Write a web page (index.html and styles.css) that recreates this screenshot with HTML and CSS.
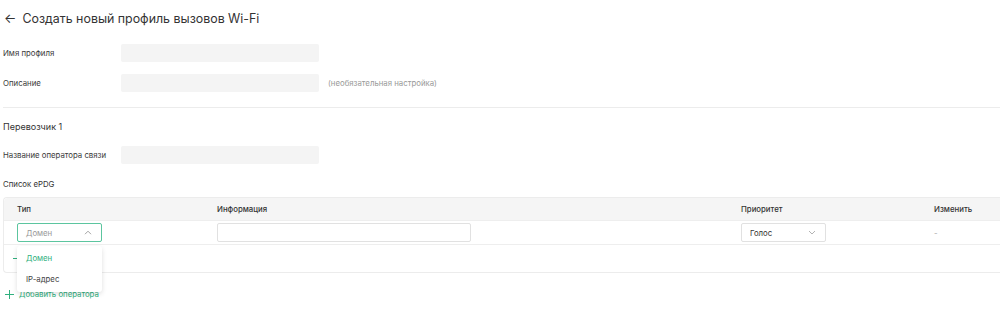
FILE: index.html
```html
<!DOCTYPE html>
<html>
	<head>
		<meta charset="UTF-8">
		<title>Wi-Fi</title>
		<link rel="stylesheet" href="styles.css">
	</head>
	<body>
		<div class="page">
			<div class="title">
				<span class="back">&larr;</span>
				<span>Создать новый профиль вызовов Wi-Fi</span>
			</div>

			<div class="field">
				<label>Имя профиля</label>
				<div class="inp"></div>
			</div>
			<div class="field">
				<label>Описание</label>
				<div class="inp"></div>
				<span class="hint">(необязательная настройка)</span>
			</div>

			<div class="divider"></div>

			<div class="carrier">Перевозчик 1</div>
			<div class="field">
				<label>Название оператора связи</label>
				<div class="inp"></div>
			</div>
			<div class="list-title">Список ePDG</div>

			<div class="table">
				<div class="row head">
					<div class="c1">Тип</div>
					<div class="c2">Информация</div>
					<div class="c3">Приоритет</div>
					<div class="c4">Изменить</div>
				</div>
				<div class="row body">
					<div class="c1">
						<div class="select open">
							<span>Домен</span>
							<svg width="8" height="5" viewBox="0 0 8 5"><path d="M1 4.2L4 1.2L7 4.2" fill="none" stroke="#999" stroke-width="0.9"/></svg>
						</div>
						<div class="menu">
							<div class="opt active">Домен</div>
							<div class="opt">IP-адрес</div>
						</div>
					</div>
					<div class="c2"><div class="text-inp"></div></div>
					<div class="c3">
						<div class="select">
							<span>Голос</span>
							<svg width="8" height="5" viewBox="0 0 8 5"><path d="M1 1L4 4L7 1" fill="none" stroke="#aaa" stroke-width="0.9"/></svg>
						</div>
					</div>
					<div class="c4 dash">-</div>
				</div>
				<div class="add-row">
					<svg class="plus" width="9" height="9" viewBox="0 0 9 9"><path d="M4.5 0V9M0 4.5H9" stroke="#2fb07e" stroke-width="1"/></svg>
				</div>
			</div>

			<div class="add-op">
				<svg class="plus" width="9" height="9" viewBox="0 0 9 9"><path d="M4.5 0V9M0 4.5H9" stroke="#2fb07e" stroke-width="1"/></svg>
				<span>Добавить оператора</span>
			</div>
		</div>
	</body>
</html>
```

FILE: styles.css
```css
body{
	margin: 0;
	padding: 0;
	background: #ffffff;
	font-family: Inter, "Noto Sans", sans-serif;
	color: #333333;
}
.page{
	padding: 8px 0 0 3px;
}
.title{
	display: flex;
	align-items: center;
	gap: 6px;
	font-size: 12.4px;
	color: #333;
	height: 20px;
}
.back{
	font-size: 13px;
	margin-left: 1px;
}
.field{
	display: flex;
	align-items: center;
	font-size: 7.8px;
	height: 18px;
	color: #3a3a3a;
}
.title + .field{
	margin-top: 16px;
}
.field + .field{
	margin-top: 12px;
}
.field label{
	width: 118px;
}
.inp{
	width: 198px;
	height: 18px;
	background: #f4f4f4;
	border-radius: 2px;
}
.hint{
	margin-left: 9px;
	color: #999;
}
.divider{
	height: 1px;
	background: #ececec;
	margin-top: 15px;
}
.carrier{
	margin-top: 12px;
	font-size: 9px;
	height: 13px;
	line-height: 13px;
}
.carrier + .field{
	margin-top: 13px;
}
.list-title{
	margin-top: 14px;
	font-size: 7.8px;
	height: 12px;
	line-height: 12px;
}
.table{
	margin-top: 7px;
	border: 1px solid #ececec;
	border-right: none;
	border-radius: 4px 0 0 4px;
	height: 76px;
	box-sizing: border-box;
}
.row{
	display: flex;
	align-items: center;
	font-size: 7.8px;
	padding-left: 13px;
	border-bottom: 1px solid #eeeeee;
}
.head{
	background: #f5f5f5;
	height: 22px;
	color: #333;
	font-weight: 500;
	border-radius: 4px 0 0 0;
}
.body{
	height: 23px;
}
.c1{
	width: 200px;
	position: relative;
}
.c2{
	width: 524px;
}
.c3{
	width: 193px;
}
.dash{
	color: #aaa;
}
.select{
	width: 85px;
	height: 19px;
	box-sizing: border-box;
	border: 1px solid #e1e1e1;
	border-radius: 2px;
	display: flex;
	align-items: center;
	justify-content: space-between;
	padding: 0 9px 0 8px;
	color: #333;
}
.select.open{
	border-color: #5cc59f;
	color: #999;
}
.text-inp{
	width: 254px;
	height: 19px;
	box-sizing: border-box;
	border: 1px solid #e1e1e1;
	border-radius: 2px;
}
.menu{
	position: absolute;
	left: 0;
	top: 23px;
	width: 85px;
	background: #fff;
	border-radius: 3px;
	box-shadow: 0 2px 5px rgba(0,0,0,0.13);
	padding: 2px 0;
	z-index: 2;
}
.opt{
	height: 21px;
	line-height: 21px;
	padding-left: 9px;
	color: #444;
}
.opt.active{
	color: #2fb07e;
}
.add-row{
	height: 27px;
	display: flex;
	align-items: center;
	padding-left: 9px;
}
.plus{
	display: block;
	flex: none;
}
.add-op{
	margin-top: 16px;
	display: flex;
	align-items: center;
	gap: 5px;
	font-size: 7.8px;
	height: 10px;
	color: #2fb07e;
	padding-left: 2px;
}
```
